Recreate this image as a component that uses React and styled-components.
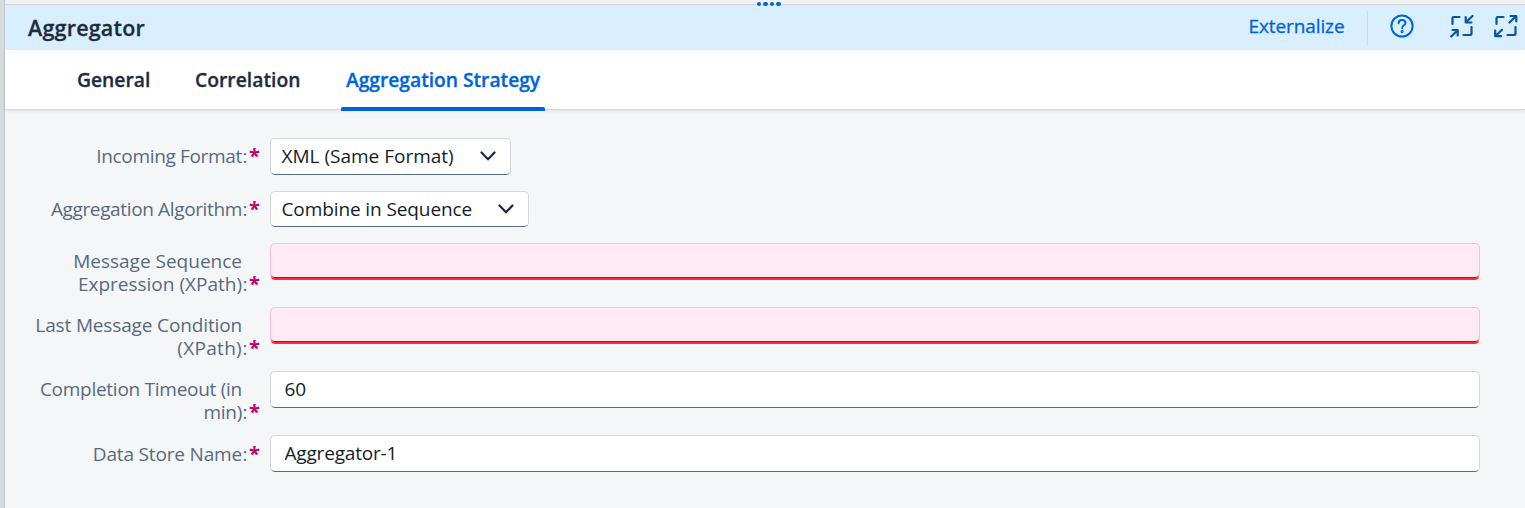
import React from "react";
import styled, { createGlobalStyle, css } from "styled-components";

const GlobalStyle = createGlobalStyle`
  * { box-sizing: border-box; }
  body {
    margin: 0;
    overflow: hidden;
    background: #f5f6f7;
    font-family: "Open Sans", "Noto Sans", sans-serif;
    color: #1d2d3e;
  }
`;

const Page = styled.div`
  display: flex;
  width: 1525px;
  height: 508px;
`;

const Gutter = styled.div`
  flex: 0 0 5px;
  background: #d5dadd;
  border-right: 1px solid #c3c9ce;
`;

const Panel = styled.main`
  flex: 1;
  min-width: 0;
  display: flex;
  flex-direction: column;
`;

const Splitter = styled.div`
  position: relative;
  height: 5px;
  background: #eff1f2;
  border-bottom: 1px solid #d5d7d9;
`;

const Grip = styled.div`
  position: absolute;
  left: 752px;
  top: 2px;
  display: flex;
  gap: 2px;
`;

const Dot = styled.span`
  width: 4.4px;
  height: 4.4px;
  border-radius: 50%;
  background: #0064d9;
`;

const Header = styled.header`
  display: flex;
  align-items: center;
  height: 45px;
  padding: 0 7.5px 0 23px;
  background: #d9eeff;
`;

const Title = styled.h1`
  margin: 1px auto 0 0;
  font-size: 21.5px;
  line-height: 30px;
  font-weight: 600;
  letter-spacing: ${(p) => p.$spacing}px;
  -webkit-text-stroke: 0.3px currentColor;
`;

const LinkButton = styled.button`
  border: 0;
  padding: 0;
  margin: 0 22.5px 3px 0;
  background: none;
  font: inherit;
  font-size: 19px;
  line-height: 28px;
  letter-spacing: ${(p) => p.$spacing}px;
  color: #0064d9;
  -webkit-text-stroke: 0.3px currentColor;
`;

const Divider = styled.span`
  width: 1px;
  height: 34px;
  background: #d5d9dd;
`;

const IconButton = styled.button`
  display: flex;
  border: 0;
  padding: 0;
  margin: 0 0 3px ${(p) => p.$gap}px;
  background: none;
  color: ${(p) => p.$color};
`;

const Tabs = styled.nav`
  display: flex;
  height: 60px;
  padding-left: 67px;
  gap: 36px;
  background: #fff;
  border-bottom: 1px solid #d5d7d9;
  box-shadow: 0 1px 3px rgba(34, 53, 72, 0.1);
`;

const Tab = styled.a`
  position: relative;
  width: ${(p) => p.$width}px;
  height: 60px;
  padding: 16px 5px 0;
  font-size: 19.3px;
  line-height: 28px;
  font-weight: 600;
  white-space: nowrap;
  letter-spacing: ${(p) => p.$spacing}px;
  -webkit-text-stroke: 0.3px currentColor;
  ${(p) =>
    p.$active &&
    css`
      color: #0064d9;
      &::after {
        content: "";
        position: absolute;
        left: 0;
        right: 0;
        bottom: -1px;
        height: 4px;
        border-radius: 2px 2px 0 0;
        background: #0064d9;
      }
    `}
`;

const Form = styled.form`
  display: flex;
  flex-direction: column;
  padding: 28px 45px 0 0;
`;

const Field = styled.div`
  display: flex;
  align-items: flex-start;
  height: ${(p) => p.$height}px;
`;

const Label = styled.label`
  display: flex;
  align-items: flex-end;
  width: 265px;
  padding-top: ${(p) => p.$top}px;
  font-size: 19px;
  line-height: 23px;
  color: #556b82;
`;

const LabelText = styled.span`
  width: 237px;
  text-align: right;
  white-space: nowrap;
`;

const Line = styled.span`
  display: block;
  letter-spacing: ${(p) => p.$spacing}px;
`;

const Colon = styled.span`
  width: 5.5px;
  text-align: right;
`;

const Star = styled.span`
  height: 23px;
  margin-left: 1.5px;
  font-size: 20px;
  line-height: 22px;
  font-weight: 700;
  color: #ba066c;
`;

const box = css`
  height: ${(p) => p.$h || 37}px;
  border: 1px solid #d3d8dd;
  border-bottom-color: #556b82;
  border-radius: 5px;
  background: #fff;
  color: #131e29;
  font-family: inherit;
  font-size: 19px;
`;

const Select = styled.div`
  ${box}
  display: flex;
  align-items: center;
  justify-content: space-between;
  width: ${(p) => p.$width}px;
  padding: 0 13px 1px 10.5px;
  white-space: nowrap;
  letter-spacing: ${(p) => p.$spacing}px;
`;

const Input = styled.input`
  ${box}
  flex: 1;
  min-width: 0;
  padding: 0 13.5px 1px;
  outline: none;
  letter-spacing: ${(p) => p.$spacing || 0}px;
  ${(p) =>
    p.$error &&
    css`
      border-color: #ffbddb;
      border-bottom: 2px solid #f72f3c;
      background: #ffeaf4;
      box-shadow: inset 0 -1px 0 #d9000d;
    `}
`;

const HelpIcon = () => (
  <svg width="24" height="24" viewBox="0 0 24 24" fill="none" stroke="currentColor" strokeWidth="2" strokeLinecap="round">
    <circle cx="12" cy="12" r="10.6" />
    <path d="M8.6 9.2C8.6 7.2 10 5.9 12 5.9s3.5 1.2 3.5 3c0 2.4-3.3 2.5-3.3 5.2" />
    <circle cx="12.1" cy="17.6" r="0.6" />
  </svg>
);

const CollapseIcon = () => (
  <svg width="24" height="24" viewBox="0 0 24 24" fill="none" stroke="currentColor" strokeWidth="2.200" strokeLinecap="round" strokeLinejoin="round">
    <path d="M2.500 10V4.200Q2.500 3 3.700 3H9.500M13.500 21h6.800Q21.500 21 21.500 19.800V13" />
    <path d="M22.500 2l-6.600 6.200M15.700 3v5.500H21.500M1.200 22.500l6.400-6.200M2.500 16h5.200v5.500" />
  </svg>
);

const ExpandIcon = () => (
  <svg width="24" height="24" viewBox="0 0 24 24" fill="none" stroke="currentColor" strokeWidth="2.200" strokeLinecap="round" strokeLinejoin="round">
    <path d="M2.500 10V4.200Q2.500 3 3.700 3H9.500M13.500 21h6.800Q21.500 21 21.500 19.800V13" />
    <path d="M15.500 8.500l6.500-6.300M16.500 2h5.800v5.500M8 15.800L1.500 22M1.200 16.500v5.700h5.800" />
  </svg>
);

const Chevron = () => (
  <svg width="18" height="12" viewBox="0 0 18 12" fill="none" stroke="#1d2d3e" strokeWidth="2.300" strokeLinecap="round" strokeLinejoin="round">
    <path d="M2.500 2.500L9 9.300l6.500-6.800" />
  </svg>
);

function FormField({ lines, height, top = 7, children }) {
  return (
    <Field $height={height}>
      <Label $top={top}>
        <LabelText>
          {lines.map(([text, spacing]) => (
            <Line key={text} $spacing={spacing}>{text}</Line>
          ))}
        </LabelText>
        <Colon>:</Colon>
        <Star>*</Star>
      </Label>
      {children}
    </Field>
  );
}

export default function App() {
  return (
    <>
      <GlobalStyle />
      <Page>
        <Gutter />
        <Panel>
          <Splitter>
            <Grip><Dot /><Dot /><Dot /><Dot /></Grip>
          </Splitter>
          <Header>
            <Title $spacing={0.2}>Aggregator</Title>
            <LinkButton $spacing={-0.1}>Externalize</LinkButton>
            <Divider />
            <IconButton $gap={22} $color="#0064d9" aria-label="Help"><HelpIcon /></IconButton>
            <IconButton $gap={35.5} $color="#0854a0" aria-label="Collapse"><CollapseIcon /></IconButton>
            <IconButton $gap={20} $color="#0854a0" aria-label="Expand"><ExpandIcon /></IconButton>
          </Header>
          <Tabs>
            <Tab $width={82} $spacing={0}>General</Tab>
            <Tab $width={115} $spacing={0.02}>Correlation</Tab>
            <Tab $width={204} $spacing={-0.04} $active>Aggregation Strategy</Tab>
          </Tabs>
          <Form>
            <FormField height={53} lines={[["Incoming Format", -0.33]]}>
              <Select $width={241} $spacing={0}>XML (Same Format)<Chevron /></Select>
            </FormField>
            <FormField height={52} lines={[["Aggregation Algorithm", -0.36]]}>
              <Select $width={259} $h={36} $spacing={-0.1}>Combine in Sequence<Chevron /></Select>
            </FormField>
            <FormField height={64} lines={[["Message Sequence", 0], ["Expression (XPath)", 0]]}>
              <Input $error />
            </FormField>
            <FormField height={64} lines={[["Last Message Condition", -0.14], ["(XPath)", 0.3]]}>
              <Input $error />
            </FormField>
            <FormField height={64} lines={[["Completion Timeout (in", -0.27], ["min)", -0.3]]}>
              <Input defaultValue="60" />
            </FormField>
            <FormField height={64} top={8} lines={[["Data Store Name", -0.17]]}>
              <Input defaultValue="Aggregator-1" $spacing={-0.18} />
            </FormField>
          </Form>
        </Panel>
      </Page>
    </>
  );
}
